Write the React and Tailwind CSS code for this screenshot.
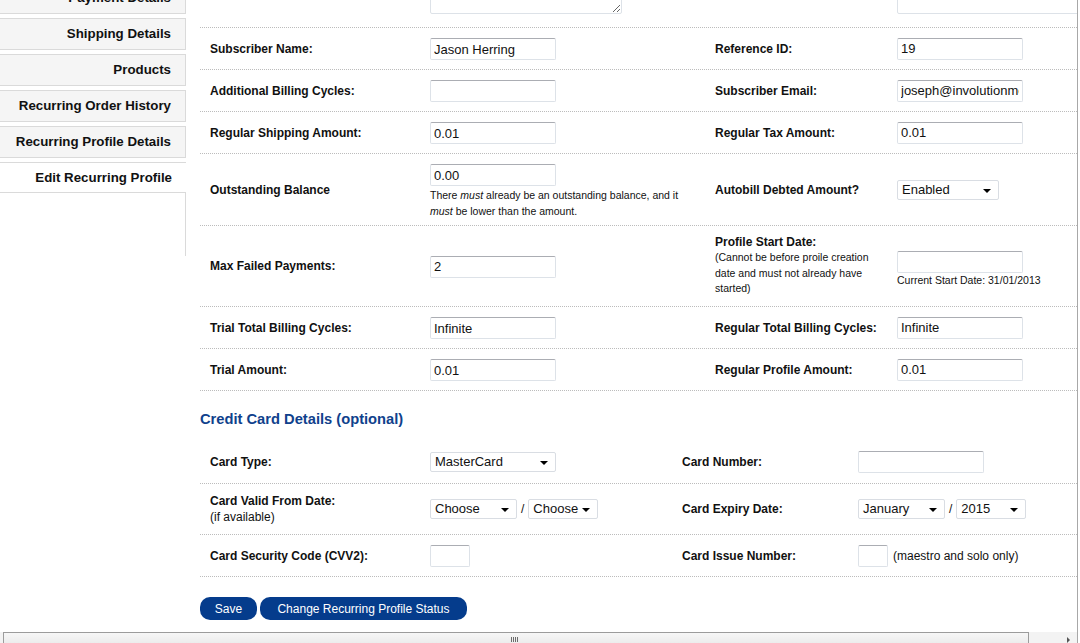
// App.jsx — Edit Recurring Profile (scrolled view)

const inputCls = "h-[22px] border border-[#dde2e8] border-t-[#abadb3] rounded-[2px] px-[3px] text-[13px] text-[#111] bg-white outline-none";

function Field({ value = '', w = 'w-[126px]' }) {
    return <input readOnly value={value} className={`${w} ${inputCls}`} />;
}

function Select({ value, w = 'w-[126px]', h = 'h-[20px]' }) {
    return (
        <div className={`${w} ${h} relative shrink-0 border border-[#d9dde3] rounded-[2px] bg-white flex items-center pl-[4px] text-[13px] text-[#111]`}>
            {value}
            <span className="absolute right-[7px] top-[8px] border-x-[4px] border-x-transparent border-t-[4px] border-t-black" />
        </div>
    );
}

function Row({ h, children }) {
    return (
        <div className={`${h} flex items-center border-b border-dotted border-[#bcbcbc]`}>
            {children}
        </div>
    );
}

function Label({ w, children }) {
    return <div className={`${w} shrink-0 pl-[10px] text-[12px] font-bold text-[#111]`}>{children}</div>;
}

const tabs = ['Payment Details', 'Shipping Details', 'Products', 'Recurring Order History', 'Recurring Profile Details'];

function Sidebar() {
    return (
        <div className="w-[186px] shrink-0 -mt-[18px]">
            {tabs.map((t) => (
                <div key={t} className="h-[32px] mb-[4px] bg-[#f5f5f5] border-y border-r border-[#dadada]
                                        flex items-center justify-end pr-[14px] text-[13.3px] font-bold text-[#111]">
                    {t}
                </div>
            ))}
            <div className="h-[30px] border-t border-[#dadada] flex items-center justify-end pr-[14px]
                            text-[13.3px] font-bold text-[#111]">
                Edit Recurring Profile
            </div>
            <div className="h-[64px] border-t border-r border-[#dadada] bg-white" />
        </div>
    );
}

// column widths, profile table
const A = 'w-[230px]', B = 'w-[275px]', C = 'w-[192px]';
// column widths, card table
const CA = 'w-[230px]', CB = 'w-[242px]', CC = 'w-[186px]';

function ProfileTable() {
    return (
        <div>
            <div className="h-[28px] flex items-end pb-[13px] border-b border-dotted border-[#bcbcbc]">
                <div className={`${A} shrink-0`} />
                <div className={`${B} shrink-0`}>
                    <textarea readOnly className="block w-[192px] h-[48px] border border-[#dde2e8] rounded-[2px] bg-white outline-none" />
                </div>
                <div className={`${C} shrink-0`} />
                <div className="w-[220px] h-[48px] shrink-0 border border-[#dde2e8] rounded-[2px] bg-white" />
            </div>

            <Row h="h-[42px]">
                <Label w={A}>Subscriber Name:</Label>
                <div className={`${B} shrink-0`}><Field value="Jason Herring" /></div>
                <Label w={C}>Reference ID:</Label>
                <Field value="19" />
            </Row>
            <Row h="h-[42px]">
                <Label w={A}>Additional Billing Cycles:</Label>
                <div className={`${B} shrink-0`}><Field /></div>
                <Label w={C}>Subscriber Email:</Label>
                <Field value="joseph@involutionmedia.com" />
            </Row>
            <Row h="h-[42px]">
                <Label w={A}>Regular Shipping Amount:</Label>
                <div className={`${B} shrink-0`}><Field value="0.01" /></div>
                <Label w={C}>Regular Tax Amount:</Label>
                <Field value="0.01" />
            </Row>
            <Row h="h-[72px]">
                <Label w={A}>Outstanding Balance</Label>
                <div className={`${B} shrink-0 pt-[2px]`}>
                    <Field value="0.00" />
                    <p className="w-[262px] text-[10.5px] leading-[16px] text-[#111]">
                        There <i>must</i> already be an outstanding balance, and it <i>must</i> be lower than the amount.
                    </p>
                </div>
                <Label w={C}>Autobill Debted Amount?</Label>
                <Select value="Enabled" w="w-[102px]" />
            </Row>
            <Row h="h-[81px]">
                <Label w={A}>Max Failed Payments:</Label>
                <div className={`${B} shrink-0`}><Field value="2" /></div>
                <div className={`${C} shrink-0 pl-[10px] text-[#111]`}>
                    <p className="text-[12px] font-bold leading-[15px]">Profile Start Date:</p>
                    <p className="w-[160px] text-[10.5px] leading-[15.5px]">
                        (Cannot be before proile creation date and must not already have started)
                    </p>
                </div>
                <div className="pt-[4px]">
                    <Field />
                    <p className="text-[10.5px] leading-[13px] mt-[1px] text-[#111]">Current Start Date: 31/01/2013</p>
                </div>
            </Row>
            <Row h="h-[42px]">
                <Label w={A}>Trial Total Billing Cycles:</Label>
                <div className={`${B} shrink-0`}><Field value="Infinite" /></div>
                <Label w={C}>Regular Total Billing Cycles:</Label>
                <Field value="Infinite" />
            </Row>
            <Row h="h-[42px]">
                <Label w={A}>Trial Amount:</Label>
                <div className={`${B} shrink-0`}><Field value="0.01" /></div>
                <Label w={C}>Regular Profile Amount:</Label>
                <Field value="0.01" />
            </Row>
        </div>
    );
}

function CardTable() {
    return (
        <div>
            <h2 className="h-[50px] pt-[18px] text-[14.7px] leading-[20px] font-bold text-[#0f418c]">
                Credit Card Details (optional)
            </h2>
            <Row h="h-[43px]">
                <Label w={CA}>Card Type:</Label>
                <div className={`${CB} shrink-0`}><Select value="MasterCard" w="w-[126px]" /></div>
                <Label w={CC}>Card Number:</Label>
                <Field />
            </Row>
            <Row h="h-[51px]">
                <div className={`${CA} shrink-0 pl-[10px] text-[12px] text-[#111] leading-[16px]`}>
                    <p className="font-bold">Card Valid From Date:</p>
                    <p>(if available)</p>
                </div>
                <div className={`${CB} shrink-0 flex items-center`}>
                    <Select value="Choose" w="w-[87px]" />
                    <span className="mx-[4px] text-[12px] text-[#111]">/</span>
                    <Select value="Choose" w="w-[70px]" />
                </div>
                <Label w={CC}>Card Expiry Date:</Label>
                <div className="flex items-center">
                    <Select value="January" w="w-[87px]" />
                    <span className="mx-[4px] text-[12px] text-[#111]">/</span>
                    <Select value="2015" w="w-[70px]" />
                </div>
            </Row>
            <Row h="h-[42px]">
                <Label w={CA}>Card Security Code (CVV2):</Label>
                <div className={`${CB} shrink-0`}><Field w="w-[40px]" /></div>
                <Label w={CC}>Card Issue Number:</Label>
                <div className="flex items-center">
                    <Field w="w-[30px]" />
                    <span className="ml-[5px] text-[12px] text-[#111]">(maestro and solo only)</span>
                </div>
            </Row>
            <div className="mt-[20px] flex gap-[3px]">
                <button className="h-[23px] w-[57px] rounded-[10px] bg-[#053c8c] text-white text-[12px]">Save</button>
                <button className="h-[23px] w-[207px] rounded-[10px] bg-[#053c8c] text-white text-[12px]">
                    Change Recurring Profile Status
                </button>
            </div>
        </div>
    );
}

function Scrollbar() {
    return (
        <div className="h-[17px] flex bg-[#f3f3f3] pl-[3px]">
            <div className="w-[1026px] h-full border-t border-x border-[#9c9c9c] bg-gradient-to-b from-[#f7f7f7] to-[#e6e6e6]
                            flex justify-center pt-[3px]">
                <div className="ml-[-4px] flex gap-[1px] h-[5px] mt-[1px]">
                    <span className="w-[1px] bg-[#6d6d6d]" />
                    <span className="w-[1px] bg-[#6d6d6d]" />
                    <span className="w-[1px] bg-[#6d6d6d]" />
                    <span className="w-[1px] bg-[#6d6d6d]" />
                </div>
            </div>
            <div className="flex-1 flex justify-end pr-[7px] pt-[5px]">
                <span className="h-0 border-y-[3px] border-y-transparent border-l-[3px] border-l-[#555]" />
            </div>
        </div>
    );
}

export default function App() {
    return (
        <div className="w-[1080px] h-[643px] overflow-hidden bg-white font-['Liberation_Sans',Arial,sans-serif]">
            <div className="w-[1078px] h-[643px] border-r border-[#a8a8a8] overflow-hidden">
                <div className="h-[632px] overflow-hidden flex">
                    <Sidebar />
                    <main className="flex-1 ml-[14px]">
                        <ProfileTable />
                        <CardTable />
                    </main>
                </div>
                <Scrollbar />
            </div>
        </div>
    );
}
